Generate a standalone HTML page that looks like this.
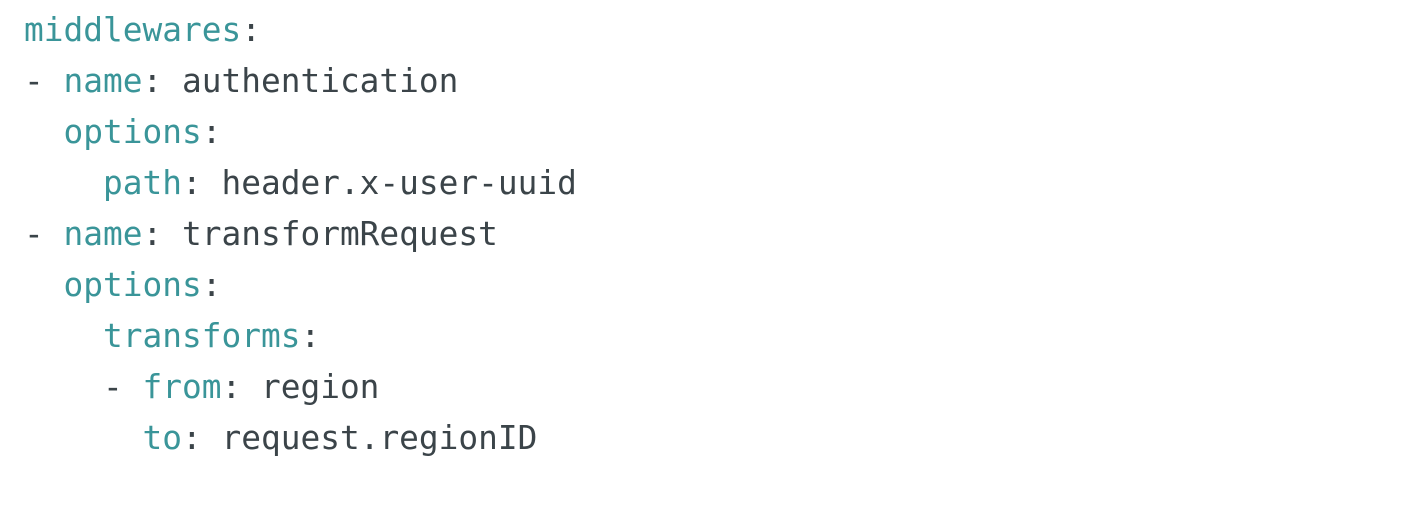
<!DOCTYPE html>
<html><head><style>
html,body{margin:0;padding:0;background:#fff;width:1404px;height:506px;overflow:hidden}
pre{margin:0;position:absolute;left:24px;top:5px;font-family:"DejaVu Sans Mono","Liberation Mono",monospace;font-size:32.8px;line-height:51px;color:#3b4449}
.k{color:#3a9599}
</style></head><body>
<pre><span class="k">middlewares</span>:
- <span class="k">name</span>: authentication
  <span class="k">options</span>:
    <span class="k">path</span>: header.x-user-uuid
- <span class="k">name</span>: transformRequest
  <span class="k">options</span>:
    <span class="k">transforms</span>:
    - <span class="k">from</span>: region
      <span class="k">to</span>: request.regionID</pre>
</body></html>
